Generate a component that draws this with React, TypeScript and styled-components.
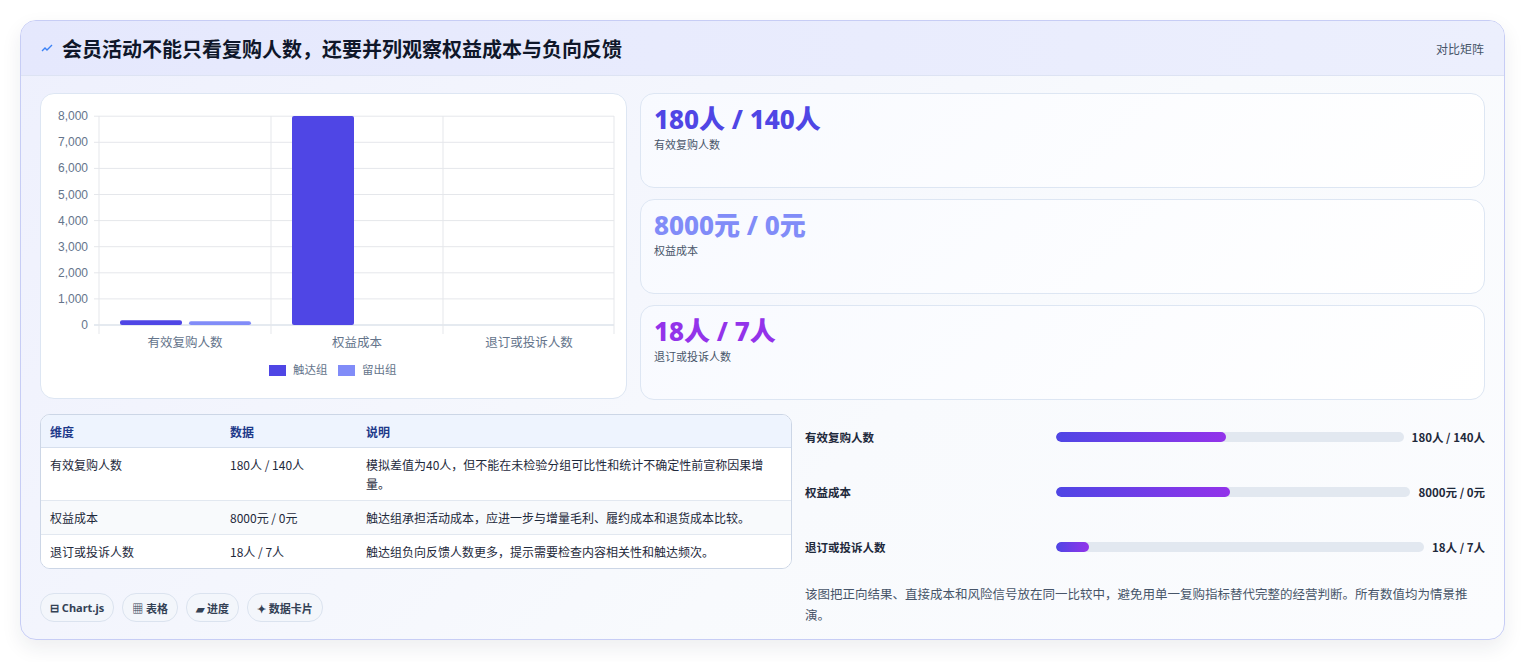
import React from "react";
import styled, { createGlobalStyle } from "styled-components";

const Global = createGlobalStyle`
  html, body { margin: 0; padding: 0; background: #ffffff; }
  body { font-family: "Noto Sans", "Noto Sans CJK SC", sans-serif; color: #1e293b; }
`;

const Page = styled.div`
  padding: 20px 20px 22px 20px;
  box-sizing: border-box;
  width: 1525px;
`;

const Card = styled.div`
  border: 1px solid #c7cdf5;
  border-radius: 16px;
  overflow: hidden;
  background: linear-gradient(135deg, #eef0fd 0%, #f8fafd 60%, #fbfcfe 100%);
  box-shadow: 0 8px 20px rgba(30, 41, 59, 0.08);
`;

const Header = styled.div`
  height: 54px;
  display: flex;
  align-items: center;
  justify-content: space-between;
  padding: 0 20px 0 20px;
  background: linear-gradient(90deg, #e5e8fd 0%, #eceffd 100%);
  border-bottom: 1px solid #dde3f3;
`;

const Title = styled.h1`
  margin: 0;
  font-size: 20px;
  font-weight: 700;
  color: #0f172a;
  display: flex;
  align-items: center;
  gap: 9px;
  font-family: "Noto Sans CJK SC", sans-serif;
`;

const HeaderTag = styled.span`
  font-size: 12px;
  color: #475569;
  font-family: "Noto Sans CJK SC", sans-serif;
`;

const Body = styled.div`
  padding: 17px 19px 14px 19px;
  display: grid;
  grid-template-columns: 587px 1fr;
  gap: 14px 13px;
`;

const Panel = styled.div`
  background: #ffffff;
  border: 1px solid #dde6f3;
  border-radius: 14px;
  height: 306px;
  box-sizing: border-box;
`;

const Stats = styled.div`
  display: flex;
  flex-direction: column;
  gap: 11px;
`;

const Stat = styled.div`
  height: 95px;
  box-sizing: border-box;
  border: 1px solid #dde6f3;
  border-radius: 14px;
  background: linear-gradient(135deg, #f8faff, #ffffff);
  padding: 9px 13px;
`;

const StatValue = styled.div<{ $c: string }>`
  font-size: 26px;
  font-weight: 800;
  color: ${(p) => p.$c};
  line-height: 32px;
  font-family: "Noto Sans", "Noto Sans CJK SC", sans-serif;
`;

const StatLabel = styled.div`
  font-size: 11px;
  color: #475569;
  margin-top: 1px;
  font-family: "Noto Sans CJK SC", sans-serif;
`;

const Bottom = styled.div`
  grid-column: 1 / -1;
  display: grid;
  grid-template-columns: 752px 1fr;
  gap: 13px;
`;

const Left = styled.div`
  display: flex;
  flex-direction: column;
  gap: 24px;
`;

const Table = styled.table`
  width: 100%;
  border-collapse: separate;
  border-spacing: 0;
  border: 1px solid #ccd6e6;
  border-radius: 10px;
  overflow: hidden;
  font-size: 12px;
  font-family: "Noto Sans CJK SC", sans-serif;
  background: #fff;
`;

const Th = styled.th<{ $w?: string }>`
  text-align: left;
  font-weight: 700;
  color: #1e3a8a;
  background: #eef4fe;
  padding: 0 9px;
  height: 32px;
  border-bottom: 1px solid #d6dfed;
  width: ${(p) => p.$w || "auto"};
`;

const Td = styled.td<{ $alt?: boolean }>`
  padding: 7px 9px 7px 9px;
  color: #1e293b;
  vertical-align: top;
  line-height: 19px;
  background: ${(p) => (p.$alt ? "#f8fafc" : "#ffffff")};
  border-bottom: 1px solid #e2e8f0;
  tr:last-child & { border-bottom: none; }
`;

const Chips = styled.div`
  display: flex;
  gap: 8px;
`;

const Chip = styled.span`
  display: inline-flex;
  align-items: center;
  gap: 3px;
  height: 27px;
  padding: 0 9px;
  border: 1px solid #dbe3ef;
  border-radius: 14px;
  background: #f3f6fb;
  font-size: 11px;
  font-weight: 700;
  color: #334155;
  font-family: "Noto Sans", "Noto Sans CJK SC", sans-serif;
`;

const Right = styled.div`
  display: flex;
  flex-direction: column;
  gap: 9px;
`;

const BarRow = styled.div`
  display: flex;
  align-items: center;
  height: 46px;
  font-size: 11.5px;
  font-family: "Noto Sans CJK SC", sans-serif;
`;

const BarLabel = styled.div`
  width: 251px;
  flex: none;
  color: #1e293b;
  font-weight: 600;
`;

const Track = styled.div`
  flex: 1;
  height: 10px;
  border-radius: 5px;
  background: #e2e8f0;
  overflow: hidden;
  margin-right: 8px;
`;

const Fill = styled.div`
  height: 100%;
  border-radius: 5px;
  background: linear-gradient(90deg, #4f46e5, #9333ea);
`;

const BarValue = styled.div`
  flex: none;
  font-weight: 700;
  color: #1e293b;
`;

const Note = styled.p`
  margin: 4px 0 0;
  font-size: 12.5px;
  line-height: 21px;
  color: #475569;
  font-family: "Noto Sans CJK SC", sans-serif;
`;

const Chart = () => {
  const y0 = 231;
  const step = 26.1;
  const ticks = [0, 1, 2, 3, 4, 5, 6, 7, 8];
  const h = (v: number) => (v / 8000) * 209;
  const font = '"Liberation Sans", "Noto Sans CJK SC", sans-serif';
  return (
    <svg width="585" height="304" viewBox="0 0 585 304">
      {ticks.map((t) => (
        <g key={t}>
          <line x1={53} x2={573} y1={y0 - t * step} y2={y0 - t * step} stroke={t === 0 ? "#cbd5e1" : "#e5e7eb"} />
          <text x={47} y={y0 - t * step + 4} textAnchor="end" fontSize="12" fill="#64748b" fontFamily={font}>
            {t === 0 ? "0" : `${t},000`}
          </text>
        </g>
      ))}
      {[58, 230, 402, 573].map((x) => (
        <line key={x} x1={x} x2={x} y1={22} y2={240} stroke="#e5e7eb" />
      ))}
      <rect x={79} y={y0 - h(180)} width={62} height={h(180)} rx={2} fill="#4f46e5" />
      <rect x={148} y={y0 - h(140)} width={62} height={h(140)} rx={2} fill="#818cf8" />
      <rect x={251} y={y0 - h(8000)} width={62} height={h(8000)} rx={2} fill="#4f46e5" />
      {[["有效复购人数", 144], ["权益成本", 316], ["退订或投诉人数", 488]].map(([l, x]) => (
        <text key={l as string} x={x as number} y={253} textAnchor="middle" fontSize="12.5" fill="#64748b" fontFamily={font}>{l}</text>
      ))}
      <rect x={228} y={271} width={17} height={11} fill="#4f46e5" />
      <text x={252} y={280} fontSize="11.5" fill="#64748b" fontFamily={font}>触达组</text>
      <rect x={297} y={271} width={17} height={11} fill="#818cf8" />
      <text x={321} y={280} fontSize="11.5" fill="#64748b" fontFamily={font}>留出组</text>
    </svg>
  );
};

const rows = [
  { d: "有效复购人数", v: "180人 / 140人", n: "模拟差值为40人，但不能在未检验分组可比性和统计不确定性前宣称因果增量。", p: 49 },
  { d: "权益成本", v: "8000元 / 0元", n: "触达组承担活动成本，应进一步与增量毛利、履约成本和退货成本比较。", p: 49 },
  { d: "退订或投诉人数", v: "18人 / 7人", n: "触达组负向反馈人数更多，提示需要检查内容相关性和触达频次。", p: 9 },
];

export default function App() {
  return (
    <Page>
      <Global />
      <Card>
        <Header>
          <Title>
            <svg width="12" height="10" viewBox="0 0 12 10">
              <path d="M1 8 L4 5 L6 7 L11 2" stroke="#3b82f6" strokeWidth="1.4" fill="none" />
            </svg>
            会员活动不能只看复购人数，还要并列观察权益成本与负向反馈
          </Title>
          <HeaderTag>对比矩阵</HeaderTag>
        </Header>
        <Body>
          <Panel><Chart /></Panel>
          <Stats>
            <Stat><StatValue $c="#4f46e5">180人 / 140人</StatValue><StatLabel>有效复购人数</StatLabel></Stat>
            <Stat><StatValue $c="#818cf8">8000元 / 0元</StatValue><StatLabel>权益成本</StatLabel></Stat>
            <Stat><StatValue $c="#9333ea">18人 / 7人</StatValue><StatLabel>退订或投诉人数</StatLabel></Stat>
          </Stats>
          <Bottom>
            <Left>
              <Table>
                <thead>
                  <tr><Th $w="162px">维度</Th><Th $w="118px">数据</Th><Th>说明</Th></tr>
                </thead>
                <tbody>
                  {rows.map((r, i) => (
                    <tr key={r.d}>
                      <Td $alt={i === 1}>{r.d}</Td>
                      <Td $alt={i === 1}>{r.v}</Td>
                      <Td $alt={i === 1}>{r.n}</Td>
                    </tr>
                  ))}
                </tbody>
              </Table>
              <Chips>
                <Chip>⊟ Chart.js</Chip>
                <Chip>▦ 表格</Chip>
                <Chip>▰ 进度</Chip>
                <Chip>✦ 数据卡片</Chip>
              </Chips>
            </Left>
            <Right>
              {rows.map((r) => (
                <BarRow key={r.d}>
                  <BarLabel>{r.d}</BarLabel>
                  <Track><Fill style={{ width: `${r.p}%` }} /></Track>
                  <BarValue>{r.v}</BarValue>
                </BarRow>
              ))}
              <Note>该图把正向结果、直接成本和风险信号放在同一比较中，避免用单一复购指标替代完整的经营判断。所有数值均为情景推演。</Note>
            </Right>
          </Bottom>
        </Body>
      </Card>
    </Page>
  );
}
